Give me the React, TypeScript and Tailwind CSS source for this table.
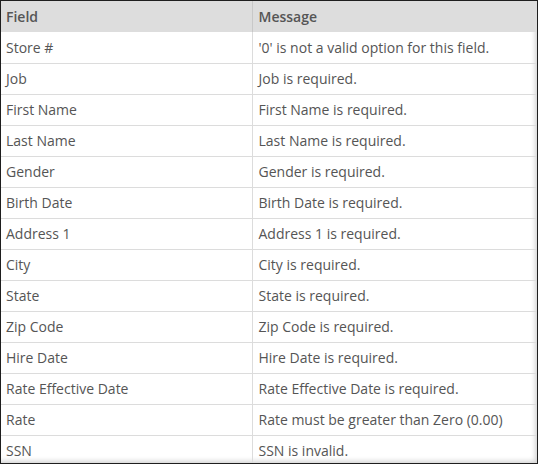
const rows: [string, string][] = [
  ['Store #', "'0' is not a valid option for this field."],
  ['Job', 'Job is required.'],
  ['First Name', 'First Name is required.'],
  ['Last Name', 'Last Name is required.'],
  ['Gender', 'Gender is required.'],
  ['Birth Date', 'Birth Date is required.'],
  ['Address 1', 'Address 1 is required.'],
  ['City', 'City is required.'],
  ['State', 'State is required.'],
  ['Zip Code', 'Zip Code is required.'],
  ['Hire Date', 'Hire Date is required.'],
  ['Rate Effective Date', 'Rate Effective Date is required.'],
  ['Rate', 'Rate must be greater than Zero (0.00)'],
  ['SSN', 'SSN is invalid.'],
]

export default function App() {
  return (
    <div className="w-[538px] h-[464px] overflow-hidden border border-[#1e1e1e] bg-white shadow-[inset_-4px_-4px_5px_-2px_rgba(0,0,0,0.18)] font-['Open_Sans',sans-serif] text-[14px] text-[#555]">
      <table className="w-full border-collapse">
        <thead>
          <tr className="bg-[#dddddd] h-[31px]">
            <th className="w-[251px] text-left font-semibold pl-[5px] border-r border-[#c8c8c8]">Field</th>
            <th className="text-left font-semibold pl-[6px]">Message</th>
          </tr>
        </thead>
        <tbody>
          {rows.map(([field, msg]) => (
            <tr key={field} className="h-[31px] border-b border-[#dcdcdc]">
              <td className="pl-[5px] border-r border-[#dcdcdc]">{field}</td>
              <td className="pl-[6px]">{msg}</td>
            </tr>
          ))}
        </tbody>
      </table>
    </div>
  )
}
